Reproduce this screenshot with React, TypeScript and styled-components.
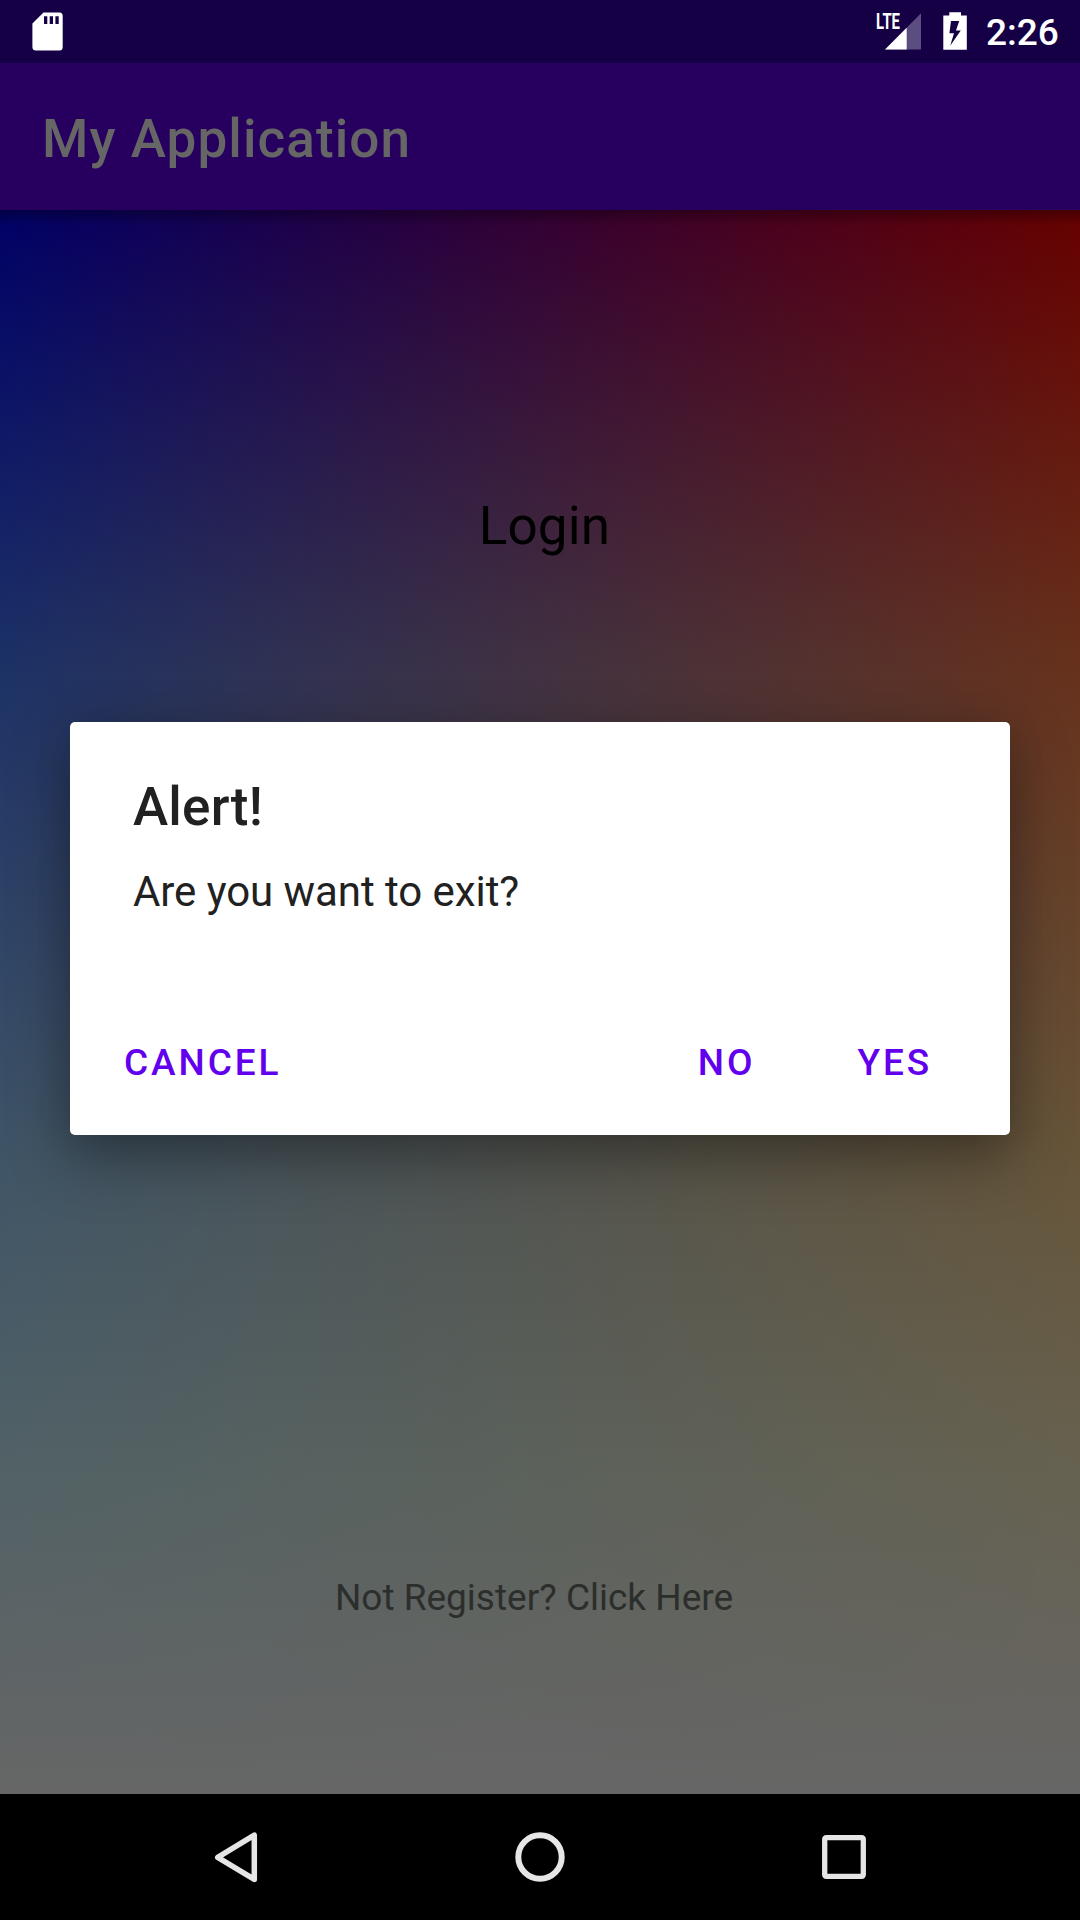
import React from "react";
import styled, { createGlobalStyle } from "styled-components";

const GlobalStyle = createGlobalStyle`
  * { box-sizing: border-box; }
  html, body { margin: 0; padding: 0; background: #000; }
  body { font-family: Roboto, "Noto Sans", sans-serif; }
`;

const Screen = styled.div`
  position: relative;
  width: 1080px;
  height: 1920px;
  display: flex;
  flex-direction: column;
  overflow: hidden;
  background: #000;
`;

const StatusBar = styled.header`
  height: 63px;
  flex: none;
  display: flex;
  justify-content: space-between;
  align-items: flex-start;
  background: #160045;
  color: #fff;
  padding: 0 21px 0 32px;
`;

const StatusGroup = styled.div`
  display: flex;
  align-items: flex-start;
`;

const Icon = styled.svg<{ $ml?: number; $mt?: number }>`
  display: block;
  flex: none;
  margin-left: ${(p) => p.$ml ?? 0}px;
  margin-top: ${(p) => p.$mt ?? 0}px;
`;

const SignalText = styled.text`
  font-family: Roboto, sans-serif;
  font-weight: 700;
  font-size: 22.5px;
`;

const Clock = styled.span`
  margin: 12px 0 0 19px;
  width: 73px;
  font-size: 37px;
  line-height: 42px;
  font-weight: 500;
  white-space: nowrap;
`;

const AppBar = styled.div`
  height: 147px;
  flex: none;
  display: flex;
  align-items: center;
  padding: 4px 42px 0;
  background: #27005f;
  color: #666;
`;

const AppTitle = styled.h1`
  margin: 0;
  font-size: 53px;
  font-weight: 500;
  letter-spacing: 1.1px;
  line-height: 62px;
`;

const Content = styled.main`
  flex: 1;
  display: flex;
  flex-direction: column;
  align-items: center;
  background:
    linear-gradient(rgba(0, 0, 0, 0.3), transparent 16px),
    linear-gradient(rgba(0, 0, 0, 0.6), rgba(0, 0, 0, 0.6)),
    linear-gradient(#000 0%, #447844 28%, #9ed48f 60%, #ccf4c9 80%, #fff 100%),
    linear-gradient(90deg, #00f, #f00);
  background-blend-mode: normal, normal, screen, normal;
`;

const LoginTitle = styled.h2`
  margin: 285px 0 0 9px;
  font-size: 53px;
  letter-spacing: 0.2px;
  font-weight: 400;
  line-height: 62px;
  color: #000;
`;

const RegisterLink = styled.p`
  margin: 1019px 0 0 -12px;
  font-size: 37px;
  line-height: 44px;
  color: #2c2e2c;
  white-space: nowrap;
`;

const NavBar = styled.nav`
  height: 126px;
  flex: none;
  display: flex;
  justify-content: space-between;
  align-items: center;
  padding: 0 206px;
  background: #000;
`;

const Dialog = styled.section`
  position: absolute;
  left: 70px;
  top: 722px;
  width: 940px;
  height: 413px;
  display: flex;
  flex-direction: column;
  border-radius: 5px;
  background: #fff;
  color: #212121;
  box-shadow: 0 24px 60px rgba(0, 0, 0, 0.34), 0 0 36px rgba(0, 0, 0, 0.1);
`;

const DialogTitle = styled.h3`
  margin: 54px 0 0 63px;
  font-size: 53px;
  letter-spacing: 0.2px;
  line-height: 62px;
  font-weight: 500;
`;

const DialogMessage = styled.p`
  margin: 29px 0 0 63px;
  font-size: 42px;
  letter-spacing: -0.06px;
  line-height: 50px;
`;

const Actions = styled.div`
  display: flex;
  margin-top: 123px;
  padding: 0 78px 0 54px;
`;

const Action = styled.button<{ $ml?: string }>`
  border: 0;
  padding: 0;
  margin-left: ${(p) => p.$ml ?? "0"};
  background: none;
  font: 500 37px/46px Roboto, sans-serif;
  letter-spacing: 2.9px;
  color: #6200ee;
`;

export default function App() {
  return (
    <>
      <GlobalStyle />
      <Screen>
        <StatusBar>
          <Icon $mt={12} width="32" height="40" viewBox="0 0 32 40">
            <path
              fill="#fff"
              fillRule="evenodd"
              d="M11.500 .5H27.500Q30.700 .5 30.700 4V35Q30.700 38.600 27.500 38.600H4Q.4 38.600 .4 35V11.500ZM12 4.300V12H15.300V4.300ZM17.700 4.300V12H21V4.300ZM23.400 4.300V12H26.700V4.300Z"
            />
          </Icon>
          <StatusGroup>
            <Icon width="48" height="48" $mt={4} viewBox="0 -8 48 48">
              <path d="M46 1.300V37.600H10Z" fill="#5c4d80" />
              <path d="M31.700 15.800V37.600H10Z" fill="#fff" />
              <SignalText x="1" y="17.200" textLength="24" lengthAdjust="spacingAndGlyphs" fill="#fff">
                LTE
              </SignalText>
            </Icon>
            <Icon width="26" height="40" $mt={12} $ml={18} viewBox="0 0 26 40">
              <path
                fill="#fff"
                fillRule="evenodd"
                d="M8.300 .3H20V3.600H25.800V37.700H2.300V3.600H8.300ZM10 9L8.400 21.300H13L9.200 33.800L19.800 18.600H15L18.200 9Z"
              />
            </Icon>
            <Clock>2:26</Clock>
          </StatusGroup>
        </StatusBar>
        <AppBar>
          <AppTitle>My Application</AppTitle>
        </AppBar>
        <Content>
          <LoginTitle>Login</LoginTitle>
          <RegisterLink>Not Register? Click Here</RegisterLink>
        </Content>
        <NavBar>
          <Icon width="60" height="60" viewBox="0 0 60 60" fill="none" stroke="#e6e6e6" strokeWidth="5.500" strokeLinejoin="round">
            <path d="M11.700 30.300L48.300 8.200V52.400Z" />
          </Icon>
          <Icon width="60" height="60" viewBox="0 0 60 60" fill="none" stroke="#e6e6e6" strokeWidth="6">
            <circle cx="30" cy="30" r="21.700" />
          </Icon>
          <Icon width="60" height="60" viewBox="0 0 60 60" fill="none" stroke="#e6e6e6" strokeWidth="5.300" strokeLinejoin="round">
            <rect x="10.700" y="10.700" width="38.600" height="38.600" rx="1.500" />
          </Icon>
        </NavBar>
        <Dialog role="alertdialog">
          <DialogTitle>Alert!</DialogTitle>
          <DialogMessage>Are you want to exit?</DialogMessage>
          <Actions>
            <Action>CANCEL</Action>
            <Action $ml="auto">NO</Action>
            <Action $ml="102px">YES</Action>
          </Actions>
        </Dialog>
      </Screen>
    </>
  );
}
